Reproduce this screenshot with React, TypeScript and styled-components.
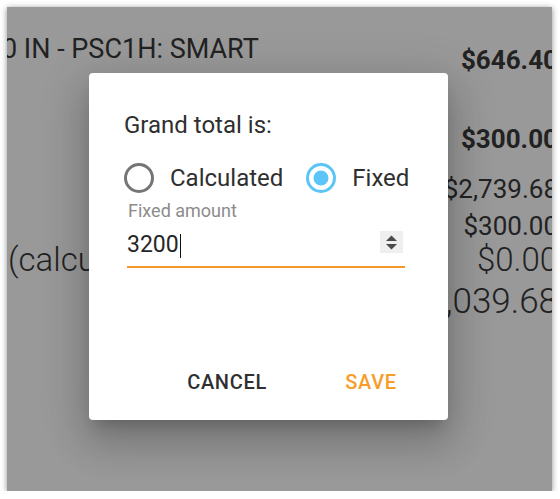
import React from "react";
import styled, { createGlobalStyle } from "styled-components";

const GlobalStyle = createGlobalStyle`
  html, body {
    margin: 0;
    padding: 0;
    background: #ffffff;
  }
  body {
    font-family: Roboto, "Liberation Sans", sans-serif;
  }
`;

const lines = [
  { label: "", amount: "$300.00", size: 26, weight: 700, gap: 49, lh: 30 },
  { label: "", amount: "$2,739.68", size: 26, weight: 400, gap: 20, lh: 30 },
  { label: "", amount: "$300.00", size: 26, weight: 400, gap: 7, lh: 30 },
  { label: "(calculated)", amount: "$0.00", size: 33, weight: 300, gap: 0, lh: 38 },
  { label: "", amount: "$3,039.68", size: 35, weight: 300, gap: 3, lh: 40 },
];

const App: React.FC = () => {
  return (
    <>
      <GlobalStyle />
      <Frame>
        <Page>
          <HeadRow>
            <HeadLabel>0 IN - PSC1H: SMART</HeadLabel>
            <Amount $size={26} $weight={700} $lh={30} $top={11}>
              $646.40
            </Amount>
          </HeadRow>
          {lines.map((line, index) => (
            <Line key={index} $gap={line.gap}>
              <LineLabel $size={line.size} $weight={line.weight} $lh={line.lh}>
                {line.label}
              </LineLabel>
              <Amount $size={line.size} $weight={line.weight} $lh={line.lh} $top={0}>
                {line.amount}
              </Amount>
            </Line>
          ))}
        </Page>
        <Overlay>
          <Dialog>
            <Title>Grand total is:</Title>
            <RadioGroup>
              <RadioItem>
                <RadioIcon viewBox="0 0 24 24">
                  <circle cx="12" cy="12" r="9" fill="none" stroke="#757575" strokeWidth="2" />
                </RadioIcon>
                <RadioLabel>Calculated</RadioLabel>
              </RadioItem>
              <RadioItem>
                <RadioIcon viewBox="0 0 24 24">
                  <circle cx="12" cy="12" r="9" fill="none" stroke="#5bc5f8" strokeWidth="2" />
                  <circle cx="12" cy="12" r="5" fill="#5bc5f8" />
                </RadioIcon>
                <RadioLabel>Fixed</RadioLabel>
              </RadioItem>
            </RadioGroup>
            <Field>
              <FieldLabel>Fixed amount</FieldLabel>
              <InputRow>
                <Value>3200</Value>
                <Caret />
                <Spinner viewBox="0 0 23 22">
                  <path d="M6 10 L11.5 4.5 L17 10 Z" fill="#4a4a4a" />
                  <path d="M6 13 L17 13 L11.5 18.5 Z" fill="#4a4a4a" />
                </Spinner>
              </InputRow>
            </Field>
            <Actions>
              <ActionButton>Cancel</ActionButton>
              <ActionButton $primary>Save</ActionButton>
            </Actions>
          </Dialog>
        </Overlay>
      </Frame>
    </>
  );
};

const Frame = styled.div`
  position: relative;
  margin: 7px 0 0 7px;
  width: 545px;
  height: 484px;
  overflow: hidden;
  background: #ffffff;
  box-shadow: 0 1px 6px rgba(0, 0, 0, 0.45);
`;

const Page = styled.div`
  width: 551px;
  padding-top: 27px;
  display: flex;
  flex-direction: column;
  color: #3a3a3a;
`;

const HeadRow = styled.div`
  display: flex;
  justify-content: space-between;
  align-items: flex-start;
`;

const HeadLabel = styled.div`
  margin-left: -5px;
  font-size: 27px;
  line-height: 30px;
  white-space: nowrap;
`;

const Line = styled.div<{ $gap: number }>`
  display: flex;
  justify-content: space-between;
  align-items: center;
  margin-top: ${(p) => p.$gap}px;
`;

const LineLabel = styled.div<{ $size: number; $weight: number; $lh: number }>`
  margin-left: 1px;
  font-size: ${(p) => p.$size}px;
  font-weight: ${(p) => p.$weight};
  line-height: ${(p) => p.$lh}px;
  white-space: nowrap;
`;

const Amount = styled.div<{ $size: number; $weight: number; $lh: number; $top: number }>`
  margin-top: ${(p) => p.$top}px;
  font-size: ${(p) => p.$size}px;
  font-weight: ${(p) => p.$weight};
  line-height: ${(p) => p.$lh}px;
  text-align: right;
  white-space: nowrap;
`;

const Overlay = styled.div`
  position: absolute;
  inset: 0;
  background: rgba(0, 0, 0, 0.4);
  display: flex;
  align-items: flex-start;
  padding: 66px 0 0 82px;
`;

const Dialog = styled.div`
  width: 359px;
  height: 347px;
  box-sizing: border-box;
  padding: 38px 0 0 35px;
  background: #ffffff;
  border-radius: 4px;
  display: flex;
  flex-direction: column;
  box-shadow: 0 11px 15px -7px rgba(0, 0, 0, 0.2), 0 24px 38px 3px rgba(0, 0, 0, 0.14),
    0 9px 46px 8px rgba(0, 0, 0, 0.12);
  color: #2f2f2f;
`;

const Title = styled.div`
  font-size: 24px;
  line-height: 28px;
`;

const RadioGroup = styled.div`
  display: flex;
  align-items: center;
  gap: 20px;
  margin: 21px 0 0 -3px;
`;

const RadioItem = styled.div`
  display: flex;
  align-items: center;
  gap: 13px;
`;

const RadioIcon = styled.svg`
  width: 36px;
  height: 36px;
  display: block;
`;

const RadioLabel = styled.span`
  font-size: 24px;
  line-height: 30px;
`;

const Field = styled.div`
  margin: 4px 0 0 3px;
  width: 278px;
  display: flex;
  flex-direction: column;
`;

const FieldLabel = styled.div`
  margin-left: 1px;
  font-size: 18px;
  line-height: 21px;
  color: #8c8c8c;
`;

const InputRow = styled.div`
  display: flex;
  align-items: flex-start;
  height: 37px;
  margin-top: 8px;
  border-bottom: 2px solid #f5992a;
`;

const Value = styled.span`
  font-size: 23px;
  line-height: 32px;
  color: #262626;
`;

const Caret = styled.span`
  width: 1px;
  height: 24px;
  margin: 5px 0 0 1px;
  background: #111111;
`;

const Spinner = styled.svg`
  width: 23px;
  height: 22px;
  margin: 2px 2px 0 auto;
  background: #efefef;
  display: block;
`;

const Actions = styled.div`
  margin-top: auto;
  margin-bottom: 20px;
  margin-right: 22px;
  display: flex;
  justify-content: flex-end;
  gap: 33px;
`;

const ActionButton = styled.button<{ $primary?: boolean }>`
  min-width: 110px;
  height: 36px;
  padding: 0 16px;
  border: none;
  background: transparent;
  font-family: Roboto, "Liberation Sans", sans-serif;
  font-size: 20px;
  font-weight: 500;
  letter-spacing: 0.7px;
  text-transform: uppercase;
  color: ${(p) => (p.$primary ? "#f89c2a" : "#2f2f2f")};
  cursor: pointer;
`;

export default App;
